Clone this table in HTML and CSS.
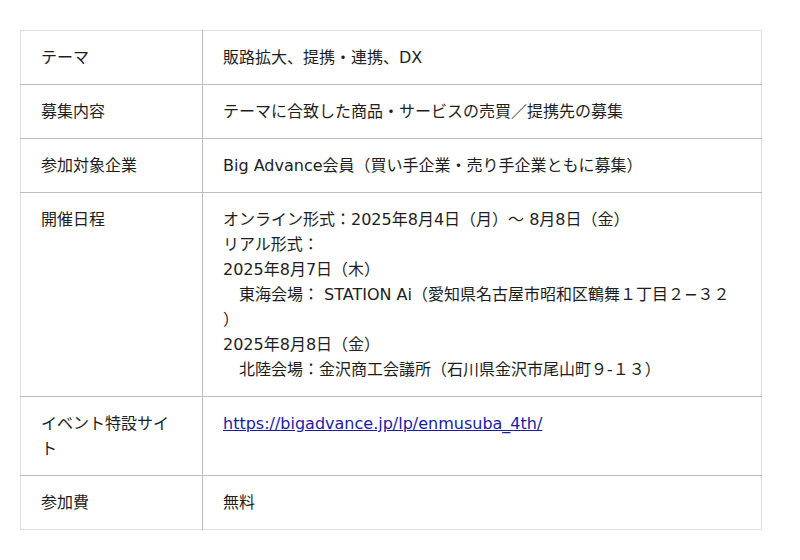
FILE: index.html
```html
<!DOCTYPE html>
<html lang="ja">
<head>
<meta charset="utf-8">
<link rel="stylesheet" href="styles.css">
</head>
<body>
<div class="page">
<table class="info">
  <colgroup><col class="c1"><col class="c2"></colgroup>
  <tr><td>テーマ</td><td>販路拡大、提携・連携、DX</td></tr>
  <tr><td>募集内容</td><td>テーマに合致した商品・サービスの売買／提携先の募集</td></tr>
  <tr><td>参加対象企業</td><td>Big Advance会員（買い手企業・売り手企業ともに募集）</td></tr>
  <tr><td>開催日程</td><td>オンライン形式：2025年8月4日（月）〜 8月8日（金）<br>リアル形式：<br>2025年8月7日（木）<br>　東海会場： STATION Ai（愛知県名古屋市昭和区鶴舞１丁目２−３２<br>）<br>2025年8月8日（金）<br>　北陸会場：金沢商工会議所（石川県金沢市尾山町９-１３）</td></tr>
  <tr><td>イベント特設サイト</td><td><a class="link" href="#">https://bigadvance.jp/lp/enmusuba_4th/</a></td></tr>
  <tr><td>参加費</td><td>無料</td></tr>
</table>
</div>
</body>
</html>
```
FILE: styles.css
```css
html, body {
  margin: 0;
  background: #ffffff;
}
.page {
  padding: 30px 0 0 20px;
}
.info {
  border-collapse: collapse;
  width: 742px;
  border: 1px solid #dedede;
  font-family: "DejaVu Sans", "Noto Sans CJK JP", sans-serif;
  font-size: 16px;
  line-height: 25px;
  color: #1e1e1e;
}
.c1 { width: 182px; }
.info td {
  padding: 14px 20px;
  vertical-align: top;
  text-align: left;
}
.info tr + tr td {
  border-top: 1px solid #bdbdbd;
}
.info td + td {
  border-left: 1px solid #bdbdbd;
}
.link {
  color: #1b1ba3;
  text-decoration: underline;
}
```
